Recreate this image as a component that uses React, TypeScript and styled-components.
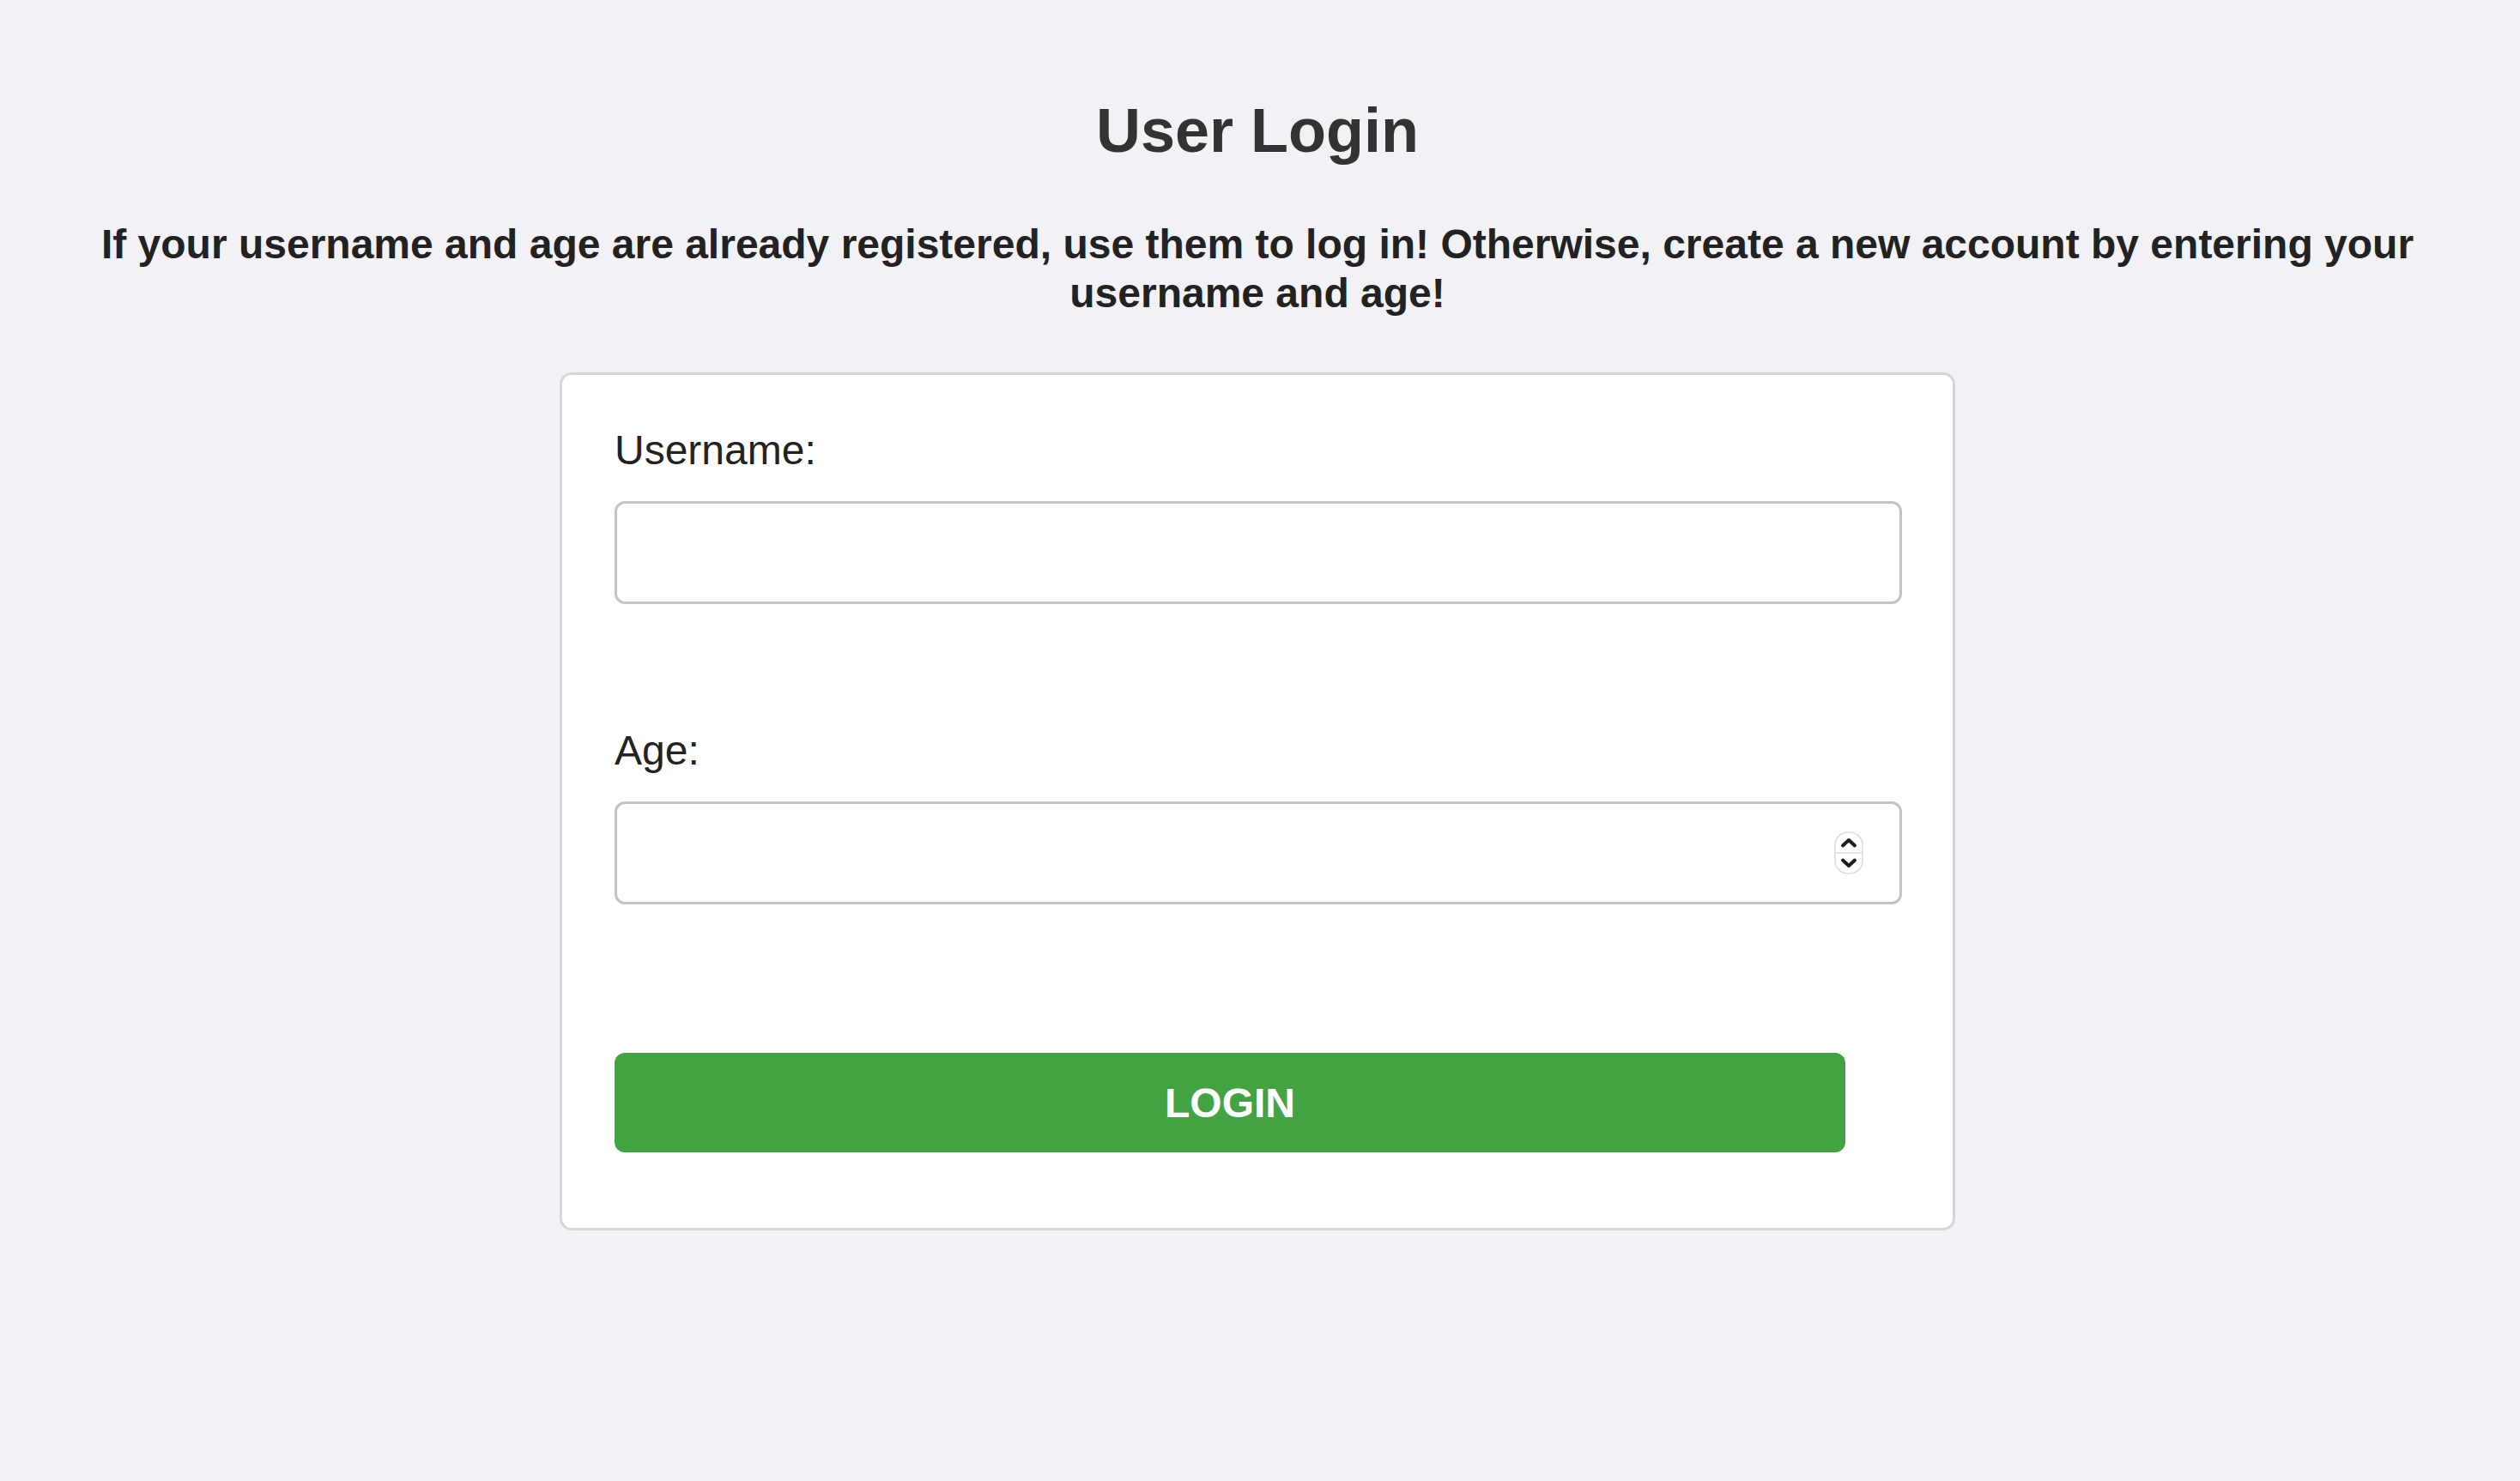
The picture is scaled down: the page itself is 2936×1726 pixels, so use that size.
import React from 'react';
import styled, { createGlobalStyle } from 'styled-components';

const GlobalStyle = createGlobalStyle`
    html, body {
        margin: 0;
        padding: 0;
        background: #f1f1f6;
        font-family: "Liberation Sans", Arial, sans-serif;
    }
    * {
        box-sizing: border-box;
    }
`;

const Page = styled.div`
    min-height: 1726px;
    padding: 111px 66px 0 60px;
    display: flex;
    flex-direction: column;
    align-items: center;
`;

const Title = styled.h1`
    margin: 0;
    font-size: 72px;
    font-weight: bold;
    line-height: normal;
    color: #333333;
    text-align: center;
`;

const Intro = styled.p`
    margin: 64px 0 0;
    font-size: 48px;
    font-weight: bold;
    line-height: 1.18;
    color: #222222;
    text-align: center;
`;

const Card = styled.form`
    margin-top: 64px;
    width: 1626px;
    background: #ffffff;
    border: 3px solid #d6d6d6;
    border-radius: 14px;
    padding: 60px 59px 88px 61px;
    display: flex;
    flex-direction: column;
`;

const Field = styled.div<{ $gap: number }>`
    display: flex;
    flex-direction: column;
    margin-bottom: ${(p) => p.$gap}px;
`;

const Label = styled.label`
    font-size: 48px;
    line-height: normal;
    color: #222222;
    margin-bottom: 32px;
`;

const InputWrap = styled.div`
    position: relative;
`;

const Input = styled.input`
    display: block;
    width: 100%;
    height: 120px;
    border: 3px solid #c4c4c4;
    border-radius: 12px;
    background: #ffffff;
    font-family: inherit;
    font-size: 48px;
    padding: 0 24px;
    outline: none;
    -moz-appearance: textfield;

    &::-webkit-inner-spin-button,
    &::-webkit-outer-spin-button {
        -webkit-appearance: none;
        margin: 0;
    }
`;

const Spinner = styled.svg`
    position: absolute;
    right: 45px;
    top: 50%;
    transform: translateY(-50%);
    width: 34px;
    height: 50px;
`;

const LoginButton = styled.button`
    width: 1434px;
    height: 116px;
    border: none;
    border-radius: 12px;
    background: #43a343;
    color: #ffffff;
    font-family: inherit;
    font-size: 48px;
    font-weight: bold;
    text-transform: uppercase;
    cursor: pointer;
`;

const Stepper: React.FC = () => (
    <Spinner viewBox="0 0 34 50">
        <rect x="1" y="1" width="32" height="48" rx="15" fill="#ffffff" stroke="#dcdcdc" strokeWidth="1.5" />
        <line x1="1" y1="25" x2="33" y2="25" stroke="#dedede" strokeWidth="1.5" />
        <polyline points="10,16.5 17,10 24,16.5" fill="none" stroke="#1e1e1e" strokeWidth="4" strokeLinecap="round" strokeLinejoin="round" />
        <polyline points="10,33.5 17,40 24,33.5" fill="none" stroke="#1e1e1e" strokeWidth="4" strokeLinecap="round" strokeLinejoin="round" />
    </Spinner>
);

export default function App() {
    return (
        <>
            <GlobalStyle />
            <Page>
                <Title>User Login</Title>
                <Intro>
                    If your username and age are already registered, use them to log in! Otherwise, create a new account by entering your username and age!
                </Intro>
                <Card onSubmit={(ev) => ev.preventDefault()}>
                    <Field $gap={143}>
                        <Label htmlFor="username">Username:</Label>
                        <InputWrap>
                            <Input id="username" type="text" />
                        </InputWrap>
                    </Field>
                    <Field $gap={173}>
                        <Label htmlFor="age">Age:</Label>
                        <InputWrap>
                            <Input id="age" type="number" />
                            <Stepper />
                        </InputWrap>
                    </Field>
                    <LoginButton type="submit">Login</LoginButton>
                </Card>
            </Page>
        </>
    );
}
